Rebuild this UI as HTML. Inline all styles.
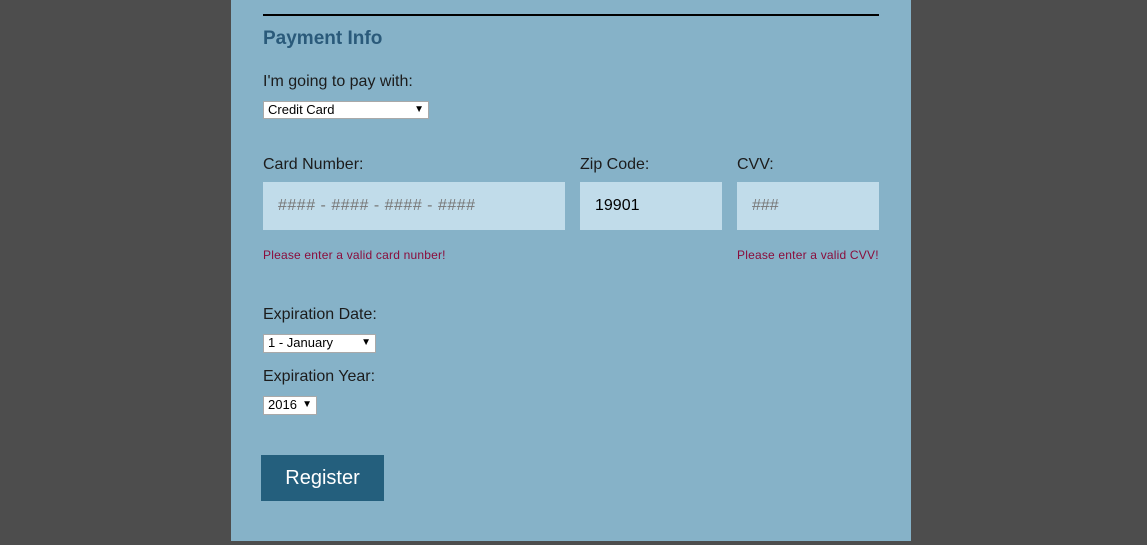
<!DOCTYPE html>
<html><head><style>
body{margin:0;width:1147px;height:545px;background:#4d4d4d;font-family:"Liberation Sans",sans-serif;position:relative;overflow:hidden}
.p{position:absolute;left:231px;top:0;width:680px;height:541px;background:#86b2c8}
.a{position:absolute}
.l{font-size:16px;color:#1c1c1c}
.s{position:absolute;background:#fff;border:1px solid #a9a9a9;box-sizing:border-box;font-size:13px;color:#000;padding-left:4px;line-height:16px}
.s span{position:absolute;right:4px;top:0;font-size:10px}
.i{position:absolute;top:182px;height:48px;background:#c1dcea;font-size:16px;line-height:48px;padding-left:15px;box-sizing:border-box}
.e{position:absolute;top:248px;font-size:12px;color:#8a0d3c;letter-spacing:0.2px}
</style></head><body>
<div class="p"></div>
<div class="a" style="left:263px;top:14px;width:616px;height:2px;background:#000"></div>
<div class="a" style="left:263px;top:28px;font-size:19px;font-weight:bold;color:#2a5a7a">Payment Info</div>
<div class="a l" style="left:263px;top:73px">I'm going to pay with:</div>
<div class="s" style="left:263px;top:101px;width:166px;height:18px">Credit Card<span>▼</span></div>
<div class="a l" style="left:263px;top:156px">Card Number:</div>
<div class="a l" style="left:580px;top:156px">Zip Code:</div>
<div class="a l" style="left:737px;top:156px">CVV:</div>
<div class="i" style="left:263px;width:302px;color:#777;letter-spacing:0.5px">#### - #### - #### - ####</div>
<div class="i" style="left:580px;width:142px;color:#000">19901</div>
<div class="i" style="left:737px;width:142px;color:#777">###</div>
<div class="e" style="left:263px">Please enter a valid card nunber!</div>
<div class="e" style="left:737px">Please enter a valid CVV!</div>
<div class="a l" style="left:263px;top:306px">Expiration Date:</div>
<div class="s" style="left:263px;top:334px;width:113px;height:19px">1 - January<span>▼</span></div>
<div class="a l" style="left:263px;top:368px">Expiration Year:</div>
<div class="s" style="left:263px;top:396px;width:54px;height:19px">2016<span>▼</span></div>
<div class="a" style="left:261px;top:455px;width:123px;height:46px;background:#245f7d;color:#fff;font-size:20px;line-height:46px;text-align:center">Register</div>
</body></html>
